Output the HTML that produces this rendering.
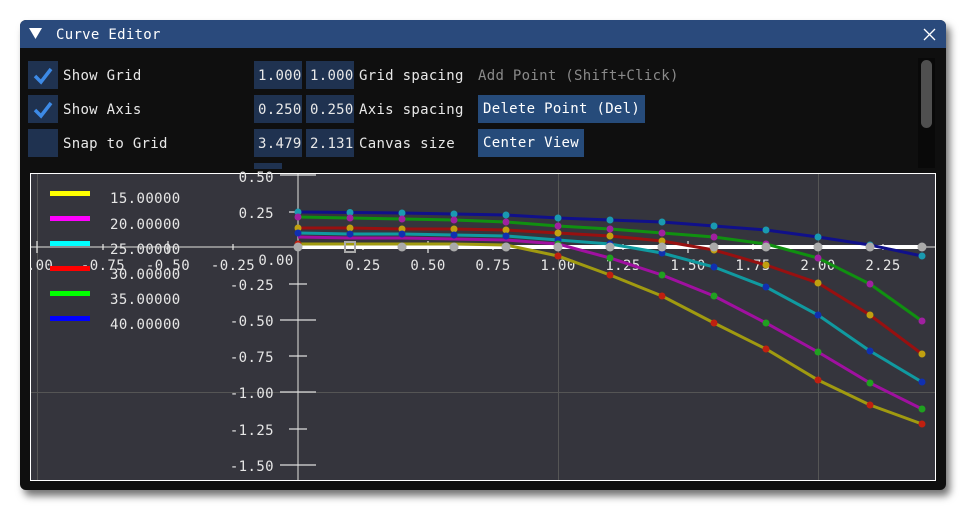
<!DOCTYPE html>
<html><head><meta charset="utf-8"><style>
body{margin:0;width:966px;height:511px;background:#fff;overflow:hidden;font-family:"DejaVu Sans Mono","Liberation Mono",monospace;}
.win{position:absolute;left:20px;top:20px;width:926px;height:470px;background:#0f0f0f;border-radius:6px;box-shadow:4px 6px 8px rgba(0,0,0,.55);overflow:hidden}
.title{position:absolute;left:0;top:0;width:926px;height:28px;background:#2a4a7c;color:#fff;font-size:14px;letter-spacing:0.3px}
.t{position:absolute;color:#e8e8e8;font-size:14px;white-space:nowrap;letter-spacing:0.3px}
.box{position:absolute;background:#1f3250}
.btn{position:absolute;background:#264b7a;color:#fff;font-size:14px;line-height:27px;padding:0 5px;white-space:nowrap;letter-spacing:0.3px}
</style></head><body>
<div class="win">
<div class="title">
<svg style="position:absolute;left:9px;top:8px" width="14" height="12"><path d="M0 0H13L6.5 11Z" fill="#fff"/></svg>
<div style="position:absolute;left:36px;top:7px">Curve Editor</div>
<svg style="position:absolute;left:903px;top:8px" width="13" height="13"><path d="M1 1L12 12M12 1L1 12" stroke="#fff" stroke-width="1.3"/></svg>
</div>
<div class="box" style="left:8px;top:41px;width:30px;height:28px"></div>
<div class="box" style="left:8px;top:75px;width:30px;height:28px"></div>
<div class="box" style="left:8px;top:109px;width:30px;height:28px"></div>
<svg style="position:absolute;left:12px;top:46px" width="22" height="20"><path d="M3 10L9 16L19 3" stroke="#3d8ae6" stroke-width="3.5" fill="none"/></svg>
<svg style="position:absolute;left:12px;top:80px" width="22" height="20"><path d="M3 10L9 16L19 3" stroke="#3d8ae6" stroke-width="3.5" fill="none"/></svg>
<div class="t" style="left:43px;top:48px">Show Grid</div>
<div class="t" style="left:43px;top:82px">Show Axis</div>
<div class="t" style="left:43px;top:116px">Snap to Grid</div>
<div class="box" style="left:234px;top:41px;width:48px;height:28px"></div>
<div class="box" style="left:286px;top:41px;width:48px;height:28px"></div>
<div class="box" style="left:234px;top:75px;width:48px;height:28px"></div>
<div class="box" style="left:286px;top:75px;width:48px;height:28px"></div>
<div class="box" style="left:234px;top:109px;width:48px;height:28px"></div>
<div class="box" style="left:286px;top:109px;width:48px;height:28px"></div>
<div class="box" style="left:234px;top:143px;width:28px;height:6px"></div>
<div class="t" style="left:238px;top:48px;width:44px;overflow:hidden">1.000</div>
<div class="t" style="left:290px;top:48px">1.000</div>
<div class="t" style="left:238px;top:82px;width:44px;overflow:hidden">0.250</div>
<div class="t" style="left:290px;top:82px">0.250</div>
<div class="t" style="left:238px;top:116px;width:44px;overflow:hidden">3.479</div>
<div class="t" style="left:290px;top:116px">2.131</div>
<div class="t" style="left:339px;top:48px">Grid spacing</div>
<div class="t" style="left:339px;top:82px">Axis spacing</div>
<div class="t" style="left:339px;top:116px">Canvas size</div>
<div class="t" style="left:458px;top:48px;color:#8a8a8a">Add Point (Shift+Click)</div>
<div class="btn" style="left:458px;top:75px;padding-top:1px">Delete Point (Del)</div>
<div class="btn" style="left:458px;top:109px;padding-top:1px">Center View</div>
<div style="position:absolute;left:898px;top:38px;width:17px;height:110px;background:#090909"></div>
<div style="position:absolute;left:901px;top:40px;width:11px;height:68px;background:#4f4f4f;border-radius:6px"></div>
</div>
<svg style="position:absolute;left:0;top:0" width="966" height="511" font-family="DejaVu Sans Mono, Liberation Mono, monospace" font-size="14" fill="#e6e6e6" letter-spacing="0.4">
<rect x="30.5" y="173.5" width="905" height="307" fill="#35353d" stroke="#fff"/>
<g stroke="#555" stroke-width="1"><line x1="37.5" y1="174" x2="37.5" y2="480"/><line x1="558.5" y1="174" x2="558.5" y2="480"/><line x1="818.5" y1="174" x2="818.5" y2="480"/><line x1="31" y1="392.5" x2="935" y2="392.5"/></g>
<g stroke="#aaa" stroke-width="1.5"><line x1="298" y1="174" x2="298" y2="480"/><line x1="31" y1="247" x2="935" y2="247"/></g>
<g stroke="#ddd" stroke-width="1.3">
<line x1="280" y1="175" x2="316" y2="175"/><line x1="289" y1="212" x2="307" y2="212"/><line x1="289" y1="284" x2="307" y2="284"/><line x1="280" y1="320" x2="316" y2="320"/><line x1="289" y1="356" x2="307" y2="356"/><line x1="280" y1="392" x2="316" y2="392"/><line x1="289" y1="429" x2="307" y2="429"/><line x1="280" y1="465" x2="316" y2="465"/>
<line x1="37" y1="241" x2="37" y2="253"/><line x1="103" y1="244" x2="103" y2="250"/><line x1="168" y1="241" x2="168" y2="253"/><line x1="233" y1="244" x2="233" y2="250"/><line x1="363" y1="244" x2="363" y2="250"/><line x1="428" y1="241" x2="428" y2="253"/><line x1="493" y1="244" x2="493" y2="250"/><line x1="623" y1="244" x2="623" y2="250"/><line x1="688" y1="241" x2="688" y2="253"/><line x1="753" y1="244" x2="753" y2="250"/><line x1="883" y1="244" x2="883" y2="250"/>
</g>
<g text-anchor="end">
<text x="274" y="182">0.50</text><text x="274" y="218">0.25</text><text x="274" y="290">-0.25</text><text x="274" y="326">-0.50</text><text x="274" y="362">-0.75</text><text x="274" y="398">-1.00</text><text x="274" y="435">-1.25</text><text x="274" y="471">-1.50</text>
</g>
<g text-anchor="middle">
<text x="40" y="270">.00</text><text x="103" y="270">-0.75</text><text x="168" y="270">-0.50</text><text x="233" y="270">-0.25</text><text x="276" y="265">0.00</text><text x="363" y="270">0.25</text><text x="428" y="270">0.50</text><text x="493" y="270">0.75</text><text x="558" y="270">1.00</text><text x="623" y="270">1.25</text><text x="688" y="270">1.50</text><text x="753" y="270">1.75</text><text x="818" y="270">2.00</text><text x="883" y="270">2.25</text>
</g>
<line x1="298" y1="247" x2="922" y2="247" stroke="#fff" stroke-width="4"/>
<g fill="none" stroke-width="3">
<polyline stroke="#10108a" points="298,212 350,212.5 402,213 454,214 506,215 558,218 610,220 662,222 714,226 766,230 818,237 870,245 922,256"/>
<polyline stroke="#109010" points="298,217 350,218 402,219 454,220 506,222 558,226 610,229 662,233 714,237 766,244 818,258 870,284 922,321"/>
<polyline stroke="#981010" points="298,228 350,228 402,229 454,229 506,230 558,233 610,236 662,241 714,250 766,265 818,283 870,315 922,354"/>
<polyline stroke="#109aa0" points="298,233 350,234 402,234 454,235 506,236 558,240 610,244 662,253 714,267 766,287 818,315 870,351 922,382"/>
<polyline stroke="#a010a0" points="298,237 350,238 402,238 454,239 506,240 558,244 610,258 662,275 714,296 766,323 818,352 870,383 922,409"/>
<polyline stroke="#a09a10" points="298,244 350,244 402,244 454,244 506,245 558,256 610,275 662,296 714,323 766,349 818,380 870,405 922,424"/>
</g>
<g stroke="none">
<g fill="#1a9ab0"><circle cx="298" cy="212" r="3.5"/><circle cx="350" cy="212.5" r="3.5"/><circle cx="402" cy="213" r="3.5"/><circle cx="454" cy="214" r="3.5"/><circle cx="506" cy="215" r="3.5"/><circle cx="558" cy="218" r="3.5"/><circle cx="610" cy="220" r="3.5"/><circle cx="662" cy="222" r="3.5"/><circle cx="714" cy="226" r="3.5"/><circle cx="766" cy="230" r="3.5"/><circle cx="818" cy="237" r="3.5"/><circle cx="870" cy="245" r="3.5"/><circle cx="922" cy="256" r="3.5"/></g>
<g fill="#a020a0"><circle cx="298" cy="217" r="3.5"/><circle cx="350" cy="218" r="3.5"/><circle cx="402" cy="219" r="3.5"/><circle cx="454" cy="220" r="3.5"/><circle cx="506" cy="222" r="3.5"/><circle cx="558" cy="226" r="3.5"/><circle cx="610" cy="229" r="3.5"/><circle cx="662" cy="233" r="3.5"/><circle cx="714" cy="237" r="3.5"/><circle cx="766" cy="244" r="3.5"/><circle cx="818" cy="258" r="3.5"/><circle cx="870" cy="284" r="3.5"/><circle cx="922" cy="321" r="3.5"/></g>
<g fill="#c0a010"><circle cx="298" cy="228" r="3.5"/><circle cx="350" cy="228" r="3.5"/><circle cx="402" cy="229" r="3.5"/><circle cx="454" cy="229" r="3.5"/><circle cx="506" cy="230" r="3.5"/><circle cx="558" cy="233" r="3.5"/><circle cx="610" cy="236" r="3.5"/><circle cx="662" cy="241" r="3.5"/><circle cx="714" cy="250" r="3.5"/><circle cx="766" cy="265" r="3.5"/><circle cx="818" cy="283" r="3.5"/><circle cx="870" cy="315" r="3.5"/><circle cx="922" cy="354" r="3.5"/></g>
<g fill="#1030b0"><circle cx="298" cy="233" r="3.5"/><circle cx="350" cy="234" r="3.5"/><circle cx="402" cy="234" r="3.5"/><circle cx="454" cy="235" r="3.5"/><circle cx="506" cy="236" r="3.5"/><circle cx="558" cy="240" r="3.5"/><circle cx="610" cy="244" r="3.5"/><circle cx="662" cy="253" r="3.5"/><circle cx="714" cy="267" r="3.5"/><circle cx="766" cy="287" r="3.5"/><circle cx="818" cy="315" r="3.5"/><circle cx="870" cy="351" r="3.5"/><circle cx="922" cy="382" r="3.5"/></g>
<g fill="#20a020"><circle cx="558" cy="244" r="3.5"/><circle cx="610" cy="258" r="3.5"/><circle cx="662" cy="275" r="3.5"/><circle cx="714" cy="296" r="3.5"/><circle cx="766" cy="323" r="3.5"/><circle cx="818" cy="352" r="3.5"/><circle cx="870" cy="383" r="3.5"/><circle cx="922" cy="409" r="3.5"/></g>
<g fill="#c02010"><circle cx="298" cy="244" r="3.5"/><circle cx="558" cy="256" r="3.5"/><circle cx="610" cy="275" r="3.5"/><circle cx="662" cy="296" r="3.5"/><circle cx="714" cy="323" r="3.5"/><circle cx="766" cy="349" r="3.5"/><circle cx="818" cy="380" r="3.5"/><circle cx="870" cy="405" r="3.5"/><circle cx="922" cy="424" r="3.5"/></g>
<g fill="#aaa"><circle cx="298" cy="247" r="4.5"/><rect x="345" y="242" width="10" height="10" fill="none" stroke="#aaa" stroke-width="2"/><circle cx="402" cy="247" r="4.5"/><circle cx="454" cy="247" r="4.5"/><circle cx="506" cy="247" r="4.5"/><circle cx="558" cy="247" r="4.5"/><circle cx="610" cy="247" r="4.5"/><circle cx="662" cy="247" r="4.5"/><circle cx="714" cy="247" r="4.5"/><circle cx="766" cy="247" r="4.5"/><circle cx="818" cy="247" r="4.5"/><circle cx="870" cy="247" r="4.5"/><circle cx="922" cy="247" r="4.5"/></g>
</g>
<g>
<rect x="50" y="191" width="40" height="5" fill="#ffff00"/><rect x="50" y="216" width="40" height="5" fill="#ff00ff"/><rect x="50" y="241" width="40" height="5" fill="#00ffff"/><rect x="50" y="266" width="40" height="5" fill="#ff0000"/><rect x="50" y="291" width="40" height="5" fill="#00ff00"/><rect x="50" y="316" width="40" height="5" fill="#0000ff"/>
<text x="110" y="203">15.00000</text><text x="110" y="229">20.00000</text><text x="110" y="254">25.00000</text><text x="110" y="279">30.00000</text><text x="110" y="304">35.00000</text><text x="110" y="329">40.00000</text>
</g>
</svg>
</body></html>
